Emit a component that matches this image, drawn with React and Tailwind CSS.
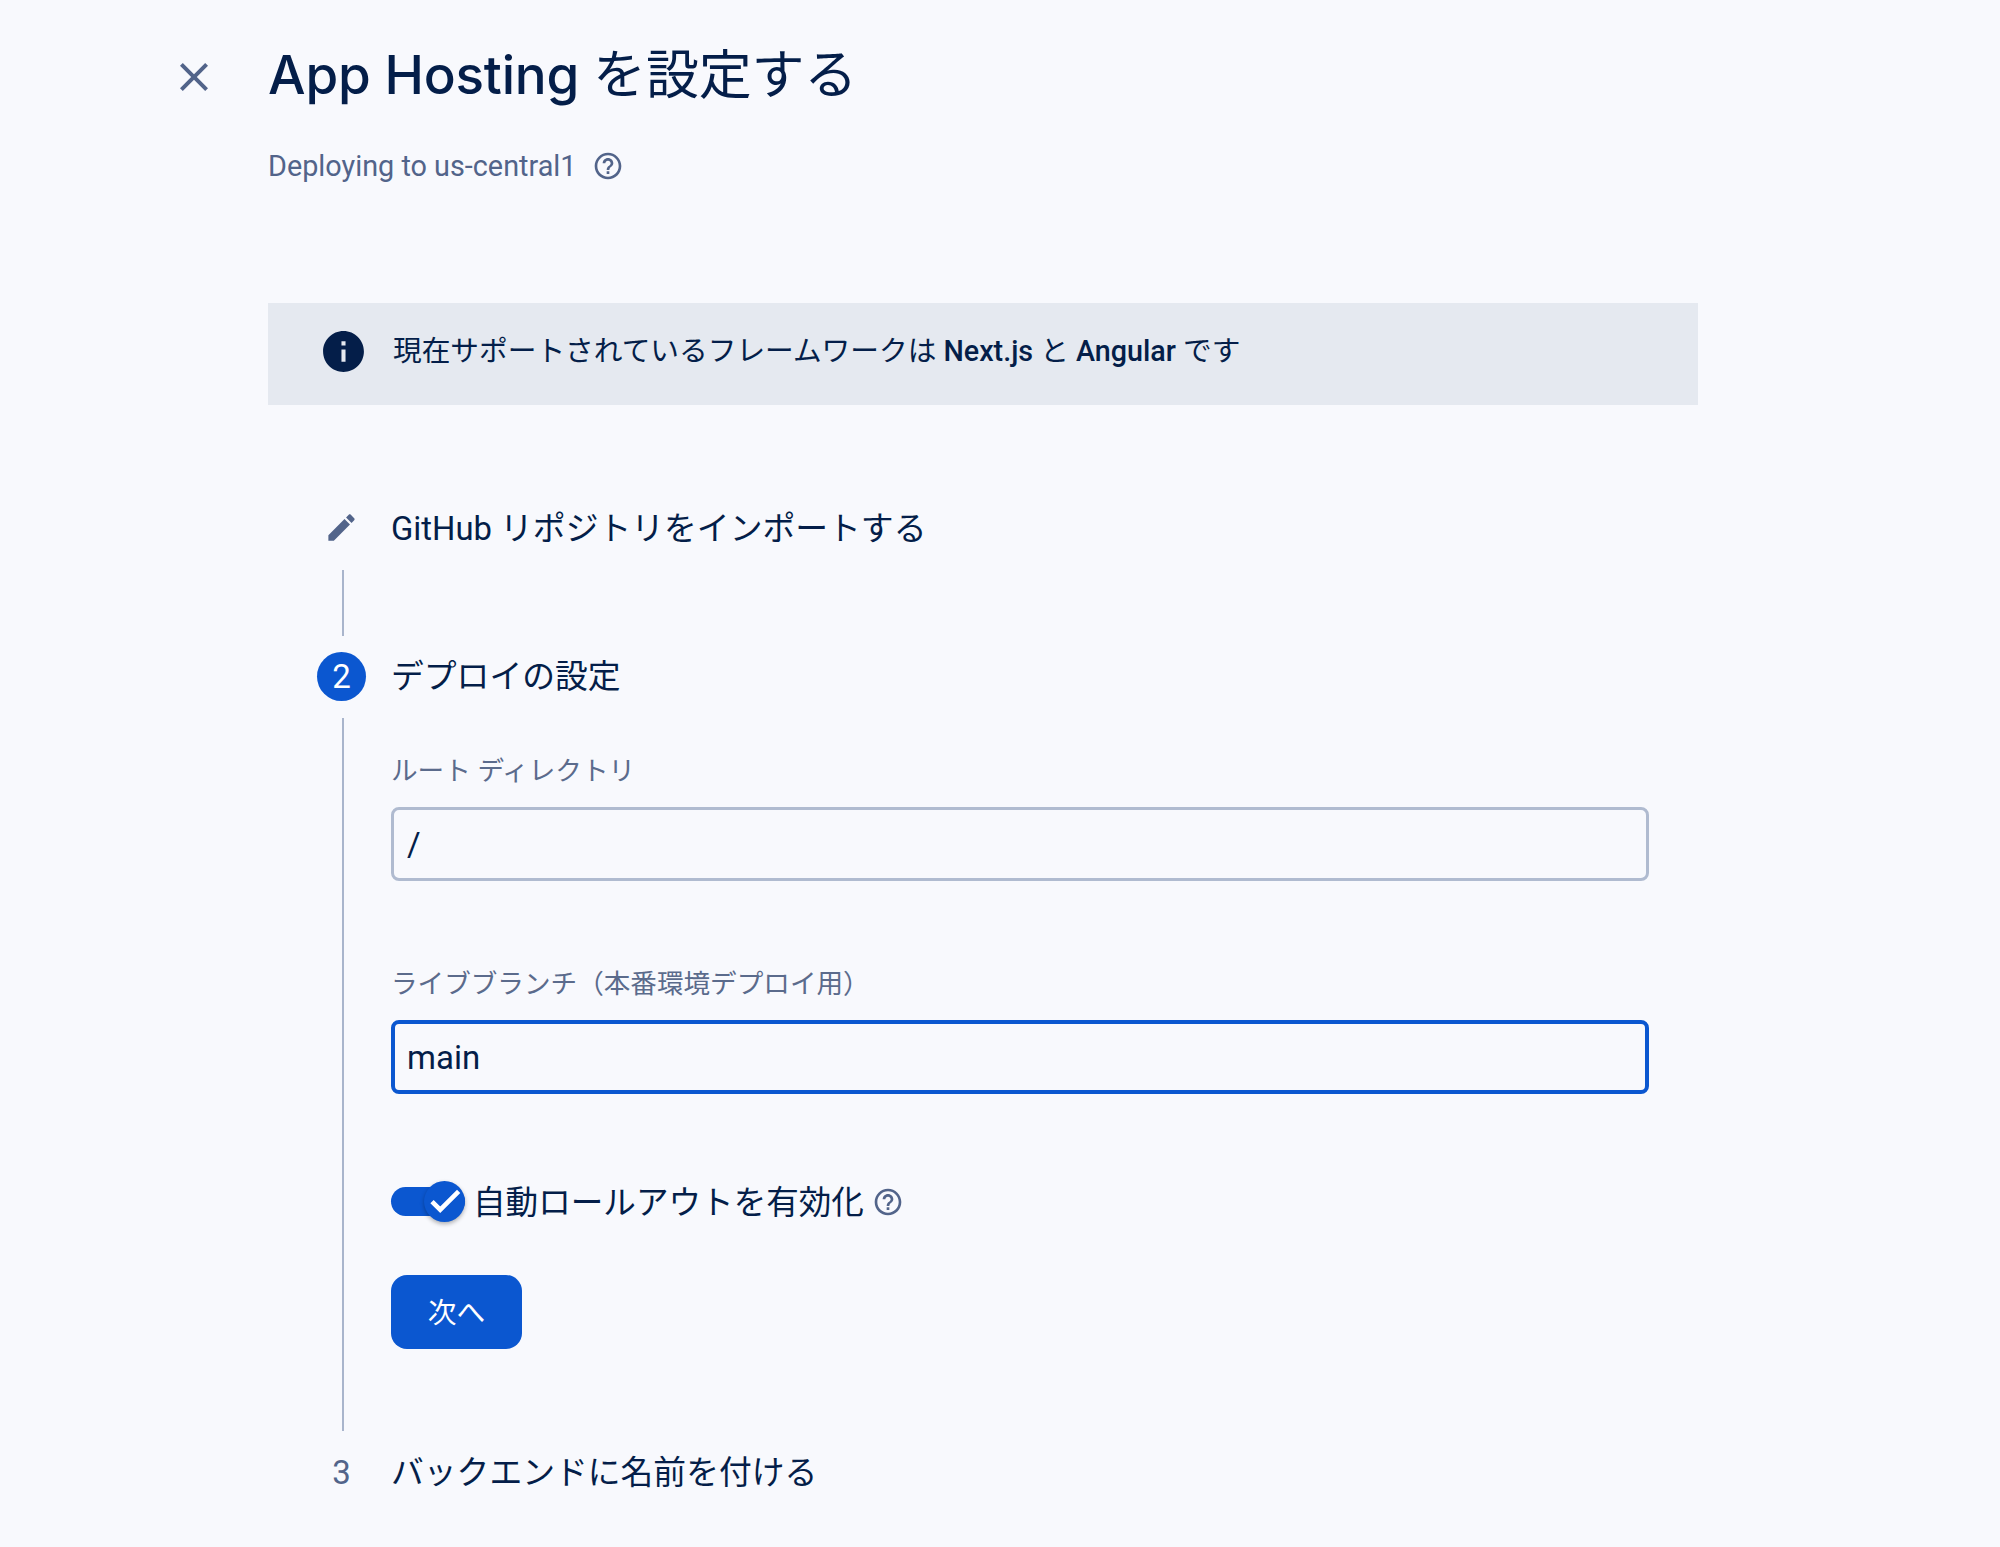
const bodyFont = "font-['Roboto','Noto_Sans_CJK_JP',sans-serif]";

const HelpIcon = ({ className }) => (
  <svg viewBox="0 0 24 24" fill="currentColor" className={className}>
    <path d="M11 18h2v-2h-2v2zm1-16C6.48 2 2 6.48 2 12s4.48 10 10 10 10-4.48 10-10S17.52 2 12 2zm0 18c-4.41 0-8-3.59-8-8s3.59-8 8-8 8 3.59 8 8-3.59 8-8 8zm0-14c-2.21 0-4 1.79-4 4h2c0-1.1.9-2 2-2s2 .9 2 2c0 2-3 1.75-3 5h2c0-2.25 3-2.5 3-5 0-2.21-1.79-4-4-4z" />
  </svg>
);

const Field = ({ label, value, focused, className }) => (
  <div className={className}>
    <label className="block h-[30px] pt-px text-[26.6px] leading-[30px] text-[#5b6b8c]">{label}</label>
    <input
      readOnly
      value={value}
      className={
        focused
          ? "mt-[22px] block h-[74px] w-[1258px] rounded-lg border-4 border-[#0b57d0] bg-transparent px-[12px] text-[33px] text-[#041e49] outline-none"
          : "mt-[22px] block h-[74px] w-[1258px] rounded-lg border-[3px] border-[#b0bbd0] bg-transparent px-[13px] text-[33px] text-[#041e49] outline-none"
      }
    />
  </div>
);

export default function App() {
  return (
    <div className={`flex min-h-[1547px] bg-[#f8f9fd] text-[#041e49] ${bodyFont}`}>
      {/* close */}
      <div className="flex w-[268px] shrink-0 items-start justify-end pr-[50px] pt-[53px]">
        <button className="text-[#52648a]">
          <svg viewBox="0 0 24 24" fill="currentColor" className="h-12 w-12">
            <path d="M19 6.41L17.59 5 12 10.59 6.41 5 5 6.41 10.59 12 5 17.59 6.41 19 12 13.41 17.59 19 19 17.59 13.41 12z" />
          </svg>
        </button>
      </div>

      <div className="w-[1430px] shrink-0">
        <h1 className="mt-[40px] h-[70px] font-['Inter','Noto_Sans_CJK_JP',sans-serif] text-[53px] font-medium leading-[70px] tracking-[-0.2px]">
          App Hosting <span className="font-normal">を設定する</span>
        </h1>
        <div className="mt-[38px] flex h-9 items-center text-[28.8px] leading-9 text-[#52648a]">
          <span>Deploying to us-central1</span>
          <HelpIcon className="ml-[15px] h-8 w-8" />
        </div>

        {/* banner */}
        <div className="mt-[119px] flex h-[102px] items-start bg-[#e5e9f0] pl-[51px]">
          <svg viewBox="0 0 24 24" fill="currentColor" className="mt-[24px] h-[49px] w-[49px] shrink-0">
            <path d="M12 2C6.48 2 2 6.48 2 12s4.48 10 10 10 10-4.48 10-10S17.52 2 12 2zm1 15h-2v-6h2v6zm0-8h-2V7h2v2z" />
          </svg>
          <p className="ml-[25px] mt-[27px] text-[28.7px] leading-[42px]">
            現在サポートされているフレームワークは <strong className="font-medium">Next.js</strong> と{" "}
            <strong className="font-medium">Angular</strong> です
          </p>
        </div>

        {/* stepper */}
        <div className="ml-[49px] mt-[98px]">
          <div className="flex h-[49px] items-center gap-[25px]">
            <div className="flex w-[49px] justify-center text-[#52648a]">
              <svg viewBox="0 0 24 24" fill="currentColor" className="h-[35px] w-[35px]">
                <path d="M3 17.25V21h3.75L17.81 9.94l-3.75-3.75L3 17.25zM20.71 7.04c.39-.39.39-1.02 0-1.41l-2.34-2.34c-.39-.39-1.02-.39-1.41 0l-1.83 1.83 3.75 3.75 1.83-1.83z" />
              </svg>
            </div>
            <span className="pt-[5px] text-[32.8px]">GitHub リポジトリをインポートする</span>
          </div>
          <div className="ml-[25px] mt-[18px] h-[66px] w-0.5 bg-[#a9b5cc]" />

          <div className="mt-[16px] flex h-[49px] items-center gap-[25px]">
            <div className="flex h-[49px] w-[49px] items-center justify-center rounded-full bg-[#0b57d0] text-[33px] text-white">
              2
            </div>
            <span className="pt-[3px] text-[32.8px]">デプロイの設定</span>
          </div>

          <div className="flex gap-[25px]">
            <div className="w-[49px] shrink-0 pl-[25px] pt-[17px]">
              <div className="h-[713px] w-0.5 bg-[#a9b5cc]" />
            </div>
            <div>
              <Field label="ルート ディレクトリ" value="/" className="mt-[54px]" />
              <Field label="ライブブランチ（本番環境デプロイ用）" value="main" focused className="mt-[87px]" />

              <div className="mt-[86px] flex h-[42px] items-center">
                <div className="relative h-[29px] w-[74px] rounded-full bg-[#0b57d0]">
                  <div className="absolute -top-[6px] left-[33px] flex h-[41px] w-[41px] items-center justify-center rounded-full bg-[#0b57d0] text-white shadow-[0_2px_4px_rgba(0,0,0,0.3)]">
                    <svg viewBox="0 0 24 24" fill="currentColor" stroke="currentColor" strokeWidth="0.9" className="h-[38px] w-[38px] shrink-0">
                      <path d="M9 16.17L4.83 12l-1.42 1.41L9 19 21 7l-1.41-1.41z" />
                    </svg>
                  </div>
                </div>
                <span className="ml-[8px] pt-[5px] text-[32.6px]">自動ロールアウトを有効化</span>
                <HelpIcon className="ml-[8px] mt-[2px] h-8 w-8 text-[#52648a]" />
              </div>

              <button className="mt-[53px] h-[74px] w-[131px] rounded-2xl bg-[#0b57d0] pt-[3px] text-[28.7px] text-white">
                次へ
              </button>
            </div>
          </div>

          <div className="mt-[16px] flex h-[49px] items-center gap-[25px]">
            <div className="w-[49px] pt-[2px] text-center text-[33px] text-[#52648a]">3</div>
            <span className="pt-[5px] text-[32.8px]">バックエンドに名前を付ける</span>
          </div>
        </div>
      </div>
    </div>
  );
}
